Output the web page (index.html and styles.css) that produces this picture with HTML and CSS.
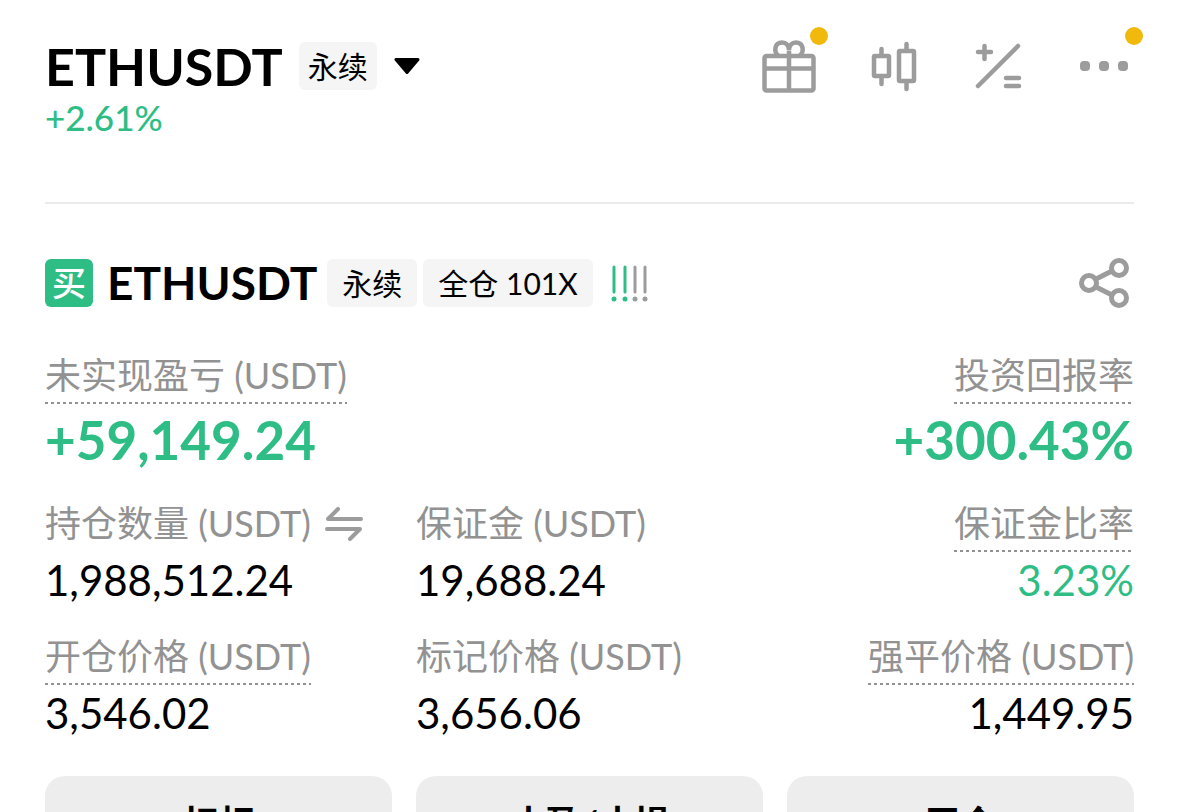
FILE: index.html
```html
<!DOCTYPE html>
<html lang="zh-CN">
<head>
<meta charset="UTF-8">
<meta name="viewport" content="width=device-width, initial-scale=1.0">
<title>ETHUSDT 永续</title>
<link rel="stylesheet" href="styles.css">
</head>
<body>
<header class="topbar">
    <div class="pair">
        <div class="pair-row">
            <h1>ETHUSDT</h1>
            <span class="tag tag-small">永续</span>
            <button class="icon-btn caret" aria-label="切换交易对">
                <svg width="26" height="18" viewBox="0 0 26 18"><path d="M2 2.500h22L13 15.500z" fill="#000" stroke="#000" stroke-width="3" stroke-linejoin="round"/></svg>
            </button>
        </div>
        <div class="change">+2.61%</div>
    </div>
    <nav class="tools">
        <button class="icon-btn" aria-label="奖励">
            <svg width="54" height="54" viewBox="0 0 54 54" fill="none" stroke="#9c9c9c" stroke-width="4.500">
                <rect x="2.500" y="17" width="49" height="34.500" rx="2"/>
                <path d="M3 29.500h48M27 12v39"/>
                <path d="M16.500 17C11 12 13 3.500 20 3.500c4 0 7 3 7 8 0-5 3-8 7-8 7 0 9 8.500 3.500 13.500"/>
            </svg>
            <span class="dot"></span>
        </button>
        <button class="icon-btn" aria-label="K线">
            <svg width="48" height="54" viewBox="0 0 48 54" fill="none" stroke="#9c9c9c" stroke-width="4.500" stroke-linecap="round">
                <rect x="3" y="17" width="15" height="20" rx="1"/>
                <path d="M10.500 10v6M10.500 38v7"/>
                <rect x="28" y="12" width="15" height="30" rx="1"/>
                <path d="M35.500 5v6M35.500 43v7"/>
            </svg>
        </button>
        <button class="icon-btn" aria-label="计算器">
            <svg width="48" height="54" viewBox="0 0 48 54" fill="none" stroke="#9c9c9c" stroke-width="4.500" stroke-linecap="round">
                <path d="M4 13h13M10.500 7v13M4 47L44 7M32 39h13M32 47h13"/>
            </svg>
        </button>
        <button class="icon-btn" aria-label="更多">
            <svg width="54" height="54" viewBox="0 0 54 54" fill="#9c9c9c">
                <rect x="3" y="22" width="10" height="10" rx="4"/>
                <rect x="22" y="22" width="10" height="10" rx="4"/>
                <rect x="41" y="22" width="10" height="10" rx="4"/>
            </svg>
            <span class="dot"></span>
        </button>
    </nav>
</header>

<main class="position">
    <div class="position-head">
        <span class="side">买</span>
        <h2>ETHUSDT</h2>
        <span class="tag">永续</span>
        <span class="tag">全仓 101X</span>
        <svg class="risk" width="38" height="38" viewBox="0 0 38 38" stroke-width="3" stroke-linecap="round">
            <path d="M3 3v25M14 3v25" stroke="#2ebd85"/>
            <path d="M24 3v25M34 3v25" stroke="#9c9c9c"/>
            <g fill="#2ebd85"><circle cx="3" cy="35" r="2.500"/><circle cx="14" cy="35" r="2.500"/></g>
            <g fill="#9c9c9c"><circle cx="24" cy="35" r="2.500"/><circle cx="34" cy="35" r="2.500"/></g>
        </svg>
        <button class="icon-btn share" aria-label="分享">
            <svg width="54" height="54" viewBox="0 0 54 54" fill="none" stroke="#9c9c9c" stroke-width="5">
                <circle cx="12" cy="27" r="7.500"/>
                <circle cx="42" cy="12" r="7.500"/>
                <circle cx="42" cy="42" r="7.500"/>
                <path d="M19 23l16-8M19 31l16 8"/>
            </svg>
        </button>
    </div>

    <dl class="stats stats-main">
        <div class="stat">
            <dt><span class="hint">未实现盈亏 (USDT)</span></dt>
            <dd class="big green">+59,149.24</dd>
        </div>
        <div class="stat right">
            <dt><span class="hint">投资回报率</span></dt>
            <dd class="big green">+300.43%</dd>
        </div>
    </dl>

    <dl class="stats">
        <div class="stat">
            <dt>
                <span>持仓数量 (USDT)</span>
                <button class="icon-btn swap" aria-label="切换单位">
                    <svg width="38" height="34" viewBox="0 0 38 34" fill="none" stroke="#9c9c9c" stroke-width="4" stroke-linecap="round" stroke-linejoin="round"><path d="M36 12H3L13 2M2 22h33L25 32"/></svg>
                </button>
            </dt>
            <dd>1,988,512.24</dd>
        </div>
        <div class="stat">
            <dt><span>保证金 (USDT)</span></dt>
            <dd>19,688.24</dd>
        </div>
        <div class="stat right">
            <dt><span class="hint">保证金比率</span></dt>
            <dd class="green">3.23%</dd>
        </div>
        <div class="stat">
            <dt><span class="hint">开仓价格 (USDT)</span></dt>
            <dd>3,546.02</dd>
        </div>
        <div class="stat">
            <dt><span>标记价格 (USDT)</span></dt>
            <dd>3,656.06</dd>
        </div>
        <div class="stat right">
            <dt><span class="hint">强平价格 (USDT)</span></dt>
            <dd>1,449.95</dd>
        </div>
    </dl>

    <div class="actions">
        <button>杠杆</button>
        <button>止盈/止损</button>
        <button>平仓</button>
    </div>
</main>
</body>
</html>
```
FILE: styles.css
```css
* {
    box-sizing: border-box;
}

body {
    margin: 0;
    padding: 0 45px;
    background: #fff;
    color: #000;
    font-family: Lato, "Noto Sans CJK SC", sans-serif;
}

h1, h2, dl, dd {
    margin: 0;
}

button {
    font-family: inherit;
    color: inherit;
    border: none;
    cursor: pointer;
}

.icon-btn {
    position: relative;
    display: flex;
    padding: 0;
    background: none;
}

.topbar {
    display: flex;
    justify-content: space-between;
    align-items: flex-start;
    padding: 36px 0 64px;
    border-bottom: 2px solid #ebebeb;
}

.pair-row {
    display: flex;
    align-items: center;
    height: 60px;
}

h1 {
    font-size: 52px;
    line-height: 60px;
    font-weight: 700;
}

.tag {
    padding: 0 15px;
    border-radius: 6px;
    background: #f5f5f5;
    font-size: 30px;
    line-height: 48px;
}

.tag-small {
    margin-left: 16px;
    padding: 0 9px;
}

.caret {
    margin-left: 17px;
}

.change {
    font-size: 35px;
    line-height: 42px;
    font-weight: 500;
    color: #2ebd85;
}

.tools {
    display: flex;
    gap: 55px;
    padding: 3px 3px 0 0;
}

.dot {
    position: absolute;
    top: -12px;
    right: -12px;
    width: 18px;
    height: 18px;
    border-radius: 50%;
    background: #f0b90b;
}

.position-head {
    display: flex;
    align-items: center;
    gap: 6px;
    margin-top: 52px;
}

.side {
    width: 48px;
    margin-right: 8px;
    border-radius: 6px;
    background: #2ebd85;
    color: #fff;
    font-size: 34px;
    font-weight: 500;
    line-height: 48px;
    text-align: center;
}

h2 {
    margin-right: 4px;
    font-size: 46px;
    line-height: 54px;
    font-weight: 700;
}

.risk {
    margin-left: 12px;
}

.share {
    margin: 0 3px 0 auto;
}

.stats {
    display: grid;
    grid-template-columns: repeat(3, 1fr);
    gap: 27px 24px;
    margin-top: 28px;
}

.stats-main {
    grid-template-columns: 1fr 1fr;
    margin-top: 43px;
}

.right {
    text-align: right;
}

dt {
    display: flex;
    align-items: flex-start;
    height: 51px;
    color: #929292;
    font-size: 36px;
    line-height: 44px;
    white-space: nowrap;
}

.right dt {
    justify-content: flex-end;
}

.hint {
    height: 51px;
    background: repeating-linear-gradient(90deg, #929292 0 3px, transparent 3px 6px) left bottom / 100% 2px no-repeat;
}

.swap {
    margin: 6px 0 0 14px;
}

dd {
    padding-top: 2px;
    font-size: 42px;
    line-height: 53px;
}

.big {
    padding-top: 3px;
    font-size: 53px;
    line-height: 66px;
    font-weight: 700;
}

.green {
    color: #2ebd85;
}

.actions {
    display: grid;
    grid-template-columns: repeat(3, 1fr);
    gap: 24px;
    margin-top: 36px;
}

.actions button {
    height: 90px;
    padding: 0;
    border-radius: 20px;
    background: #ededed;
    font-size: 36px;
    font-weight: 700;
}
```
